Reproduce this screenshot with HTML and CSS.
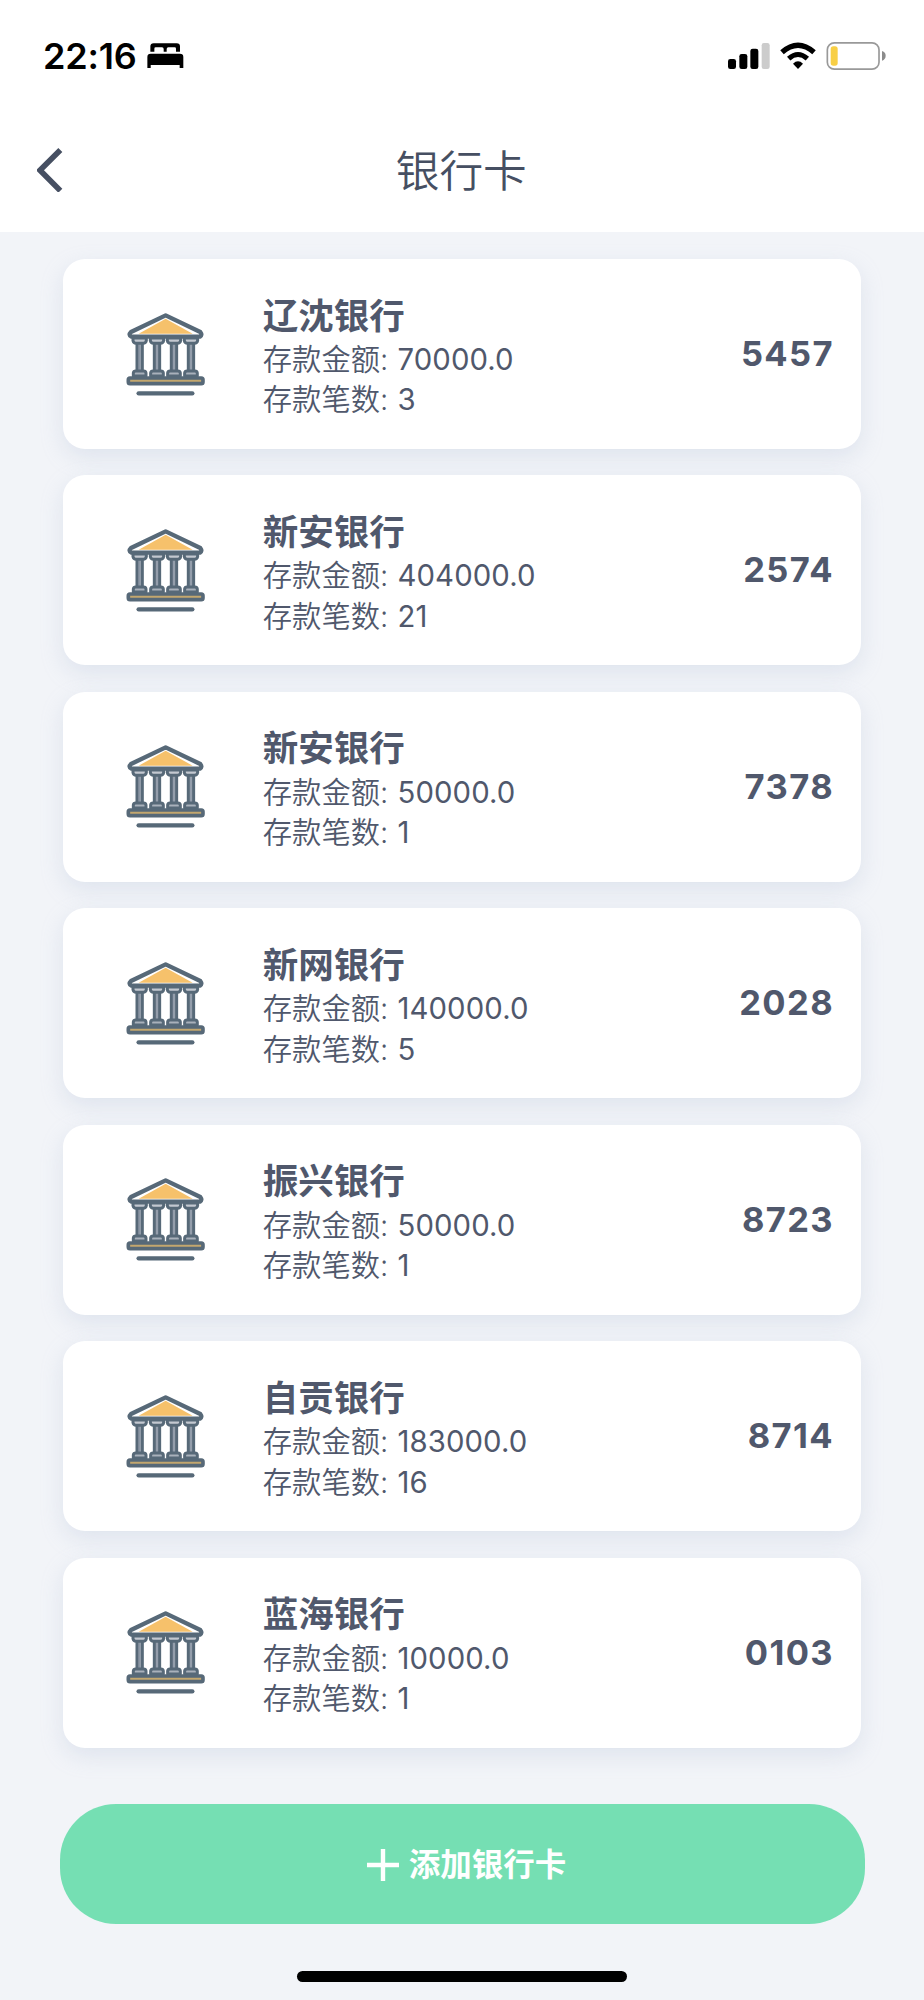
FILE: index.html
```
<!DOCTYPE html>
<html lang="zh-CN">
<head>
<meta charset="utf-8">
<title>银行卡</title>
<link rel="stylesheet" href="styles.css">
</head>
<body>
<svg class="defs" aria-hidden="true">
  <defs>
    <g id="column">
      <path d="M19 20 H35 V110 H19 Z" fill="#a1a8b5" stroke="#576978" stroke-width="9"/>
      <path d="M27 24 V104" stroke="#8893a1" stroke-width="3"/>
      <path d="M7 8 H47 V16 Q45 24 38 24 H16 Q9 24 7 16 Z" fill="#c3c8d0" stroke="#576978" stroke-width="9" stroke-linejoin="round"/>
      <path d="M8 122 V113 Q9 107 15 107 H39 Q45 107 46 113 V122 Z" fill="#a9b1bb" stroke="#576978" stroke-width="9" stroke-linejoin="round"/>
    </g>
    <symbol id="bank" viewBox="70 60 250 260">
      <path d="M195 73 L299 123 Q306 132 298 137 H92 Q82 132 91 123 Z" fill="#fff" stroke="#576978" stroke-width="13" stroke-linejoin="round"/>
      <path d="M195 83 L276 128 H114 Z" fill="#f6c16b"/>
      <use href="#column" x="90" y="133"/>
      <use href="#column" x="142" y="133"/>
      <use href="#column" x="193" y="133"/>
      <use href="#column" x="244" y="133"/>
      <rect x="83" y="261" width="224" height="17" rx="5" fill="#c3a76e" stroke="#576978" stroke-width="11"/>
      <path d="M114 307 H275" stroke="#576978" stroke-width="13" stroke-linecap="round"/>
    </symbol>
  </defs>
</svg>
<header class="header">
  <div class="status">
    <span class="time">22:16</span>
    <svg class="bed" viewBox="0 0 110 76">
      <path d="M10 26 V10 Q10 1 20 1 H89 Q99 1 99 10 V26 H87 V17 Q87 13 83 13 H64 Q59 13 59 18 V26 H50 V18 Q50 13 45 13 H26 Q22 13 22 17 V26 Z"/>
      <path d="M1 75 V42 Q1 32 11 32 H99 Q109 32 109 42 V75 H98 V66 H11 V75 Z"/>
    </svg>
    <svg class="signals" viewBox="0 0 476 84">
      <rect x="0" y="51" width="24" height="30" rx="7"/>
      <rect x="34" y="36" width="24" height="45" rx="7"/>
      <rect x="67" y="20" width="24" height="61" rx="7"/>
      <rect x="101" y="3" width="24" height="78" rx="7" fill="#ccc"/>
      <path d="M162 31 Q210 -11 258 31" fill="none" stroke="#000" stroke-width="16"/>
      <path d="M182 50 Q210 25 238 50" fill="none" stroke="#000" stroke-width="15"/>
      <path d="M195 65 Q210 51 225 65 L210 81 Z"/>
      <rect x="298" y="2.5" width="155" height="79" rx="21" fill="none" stroke="#999" stroke-width="5"/>
      <rect x="308" y="13" width="21" height="58" rx="8" fill="#f8cf45"/>
      <path d="M462 27 Q473 31 473 41 Q473 52 462 56 Z" fill="#8c8c8c"/>
    </svg>
  </div>
  <div class="nav">
    <svg class="back" viewBox="0 0 78 134"><path d="M70 6 L9 67 L70 128" fill="none" stroke="#464f62" stroke-width="17"/></svg>
    <h1 class="title">银行卡</h1>
  </div>
</header>
<main class="list">
  <section class="card"><svg class="bank"><use href="#bank"/></svg><div class="info"><h2 class="name">辽沈银行</h2><p class="row">存款金额: <span class="num">70000.0</span></p><p class="row">存款笔数: <span class="num">3</span></p></div><strong class="tail">5457</strong></section>
  <section class="card"><svg class="bank"><use href="#bank"/></svg><div class="info"><h2 class="name">新安银行</h2><p class="row">存款金额: <span class="num">404000.0</span></p><p class="row">存款笔数: <span class="num">21</span></p></div><strong class="tail">2574</strong></section>
  <section class="card"><svg class="bank"><use href="#bank"/></svg><div class="info"><h2 class="name">新安银行</h2><p class="row">存款金额: <span class="num">50000.0</span></p><p class="row">存款笔数: <span class="num">1</span></p></div><strong class="tail">7378</strong></section>
  <section class="card"><svg class="bank"><use href="#bank"/></svg><div class="info"><h2 class="name">新网银行</h2><p class="row">存款金额: <span class="num">140000.0</span></p><p class="row">存款笔数: <span class="num">5</span></p></div><strong class="tail">2028</strong></section>
  <section class="card"><svg class="bank"><use href="#bank"/></svg><div class="info"><h2 class="name">振兴银行</h2><p class="row">存款金额: <span class="num">50000.0</span></p><p class="row">存款笔数: <span class="num">1</span></p></div><strong class="tail">8723</strong></section>
  <section class="card"><svg class="bank"><use href="#bank"/></svg><div class="info"><h2 class="name">自贡银行</h2><p class="row">存款金额: <span class="num">183000.0</span></p><p class="row">存款笔数: <span class="num">16</span></p></div><strong class="tail">8714</strong></section>
  <section class="card"><svg class="bank"><use href="#bank"/></svg><div class="info"><h2 class="name">蓝海银行</h2><p class="row">存款金额: <span class="num">10000.0</span></p><p class="row">存款笔数: <span class="num">1</span></p></div><strong class="tail">0103</strong></section>
</main>
<footer class="footer">
  <button class="add"><svg class="plus" viewBox="0 0 32 32"><path d="M16 0 V32 M0 16 H32" stroke="#fff" stroke-width="4.4"/></svg><span>添加银行卡</span></button>
  <div class="home"></div>
</footer>
</body>
</html>
```
FILE: styles.css
```
* { box-sizing: border-box; margin: 0; padding: 0; }
body {
  width: 924px;
  height: 2000px;
  overflow: hidden;
  background: #f2f4f8;
  color: #50586c;
  font-family: Inter, "Noto Sans CJK SC", sans-serif;
}
.defs { display: block; width: 0; height: 0; }
.header { height: 232px; background: #fff; }
.status { display: flex; height: 112px; padding: 0 37px 0 43px; align-items: center; }
.time { font-size: 36px; font-weight: 600; line-height: 40px; color: #000; letter-spacing: -0.2px; }
.bed { width: 36.7px; height: 25.3px; margin-left: 10.5px; }
.signals { width: 158.7px; height: 28px; margin-left: auto; margin-top: -1px; }
.nav { display: flex; height: 116px; padding-left: 36.5px; align-items: center; }
.back { width: 26px; height: 44.7px; }
.title { flex: 1; margin: 3px 64px 0 0; text-align: center; font-size: 43.7px; font-weight: 350; line-height: 60px; color: #464f62; }
.list { display: grid; gap: 26.8px; padding: 27px 63px 0 62.5px; }
.card {
  display: flex;
  height: 189.7px;
  padding: 0 27px 0 61px;
  border-radius: 22px;
  background: #fff;
  box-shadow: 0 8px 22px rgba(170, 184, 212, 0.27);
}
.bank { width: 83.3px; height: 86.7px; margin-top: 51.5px; }
.info { flex: 1; padding: 35.5px 0 0 56px; }
.name { margin-bottom: 1.5px; font-size: 35.5px; font-weight: 600; line-height: 44px; }
.row { font-size: 29.3px; font-weight: 350; line-height: 40.2px; white-space: pre; }
.num { font-weight: 400; letter-spacing: 0.1px; margin-left: 1px; }
.tail { align-self: center; font-size: 34.5px; font-weight: 700; line-height: 40px; letter-spacing: 1.4px; }
.footer { padding: 56px 59.5px 0 59.5px; }
.add {
  display: flex;
  width: 100%;
  height: 120px;
  padding: 2px 0 0 9px;
  align-items: center;
  justify-content: center;
  gap: 10px;
  border: 0;
  border-radius: 56px;
  background: #75dfb3;
  color: #fff;
  font: 600 31.5px/44px Inter, "Noto Sans CJK SC", sans-serif;
}
.plus { width: 32px; height: 32px; }
.home { width: 330px; height: 11px; margin: 47.5px auto 0; border-radius: 6px; background: #000; }
```
